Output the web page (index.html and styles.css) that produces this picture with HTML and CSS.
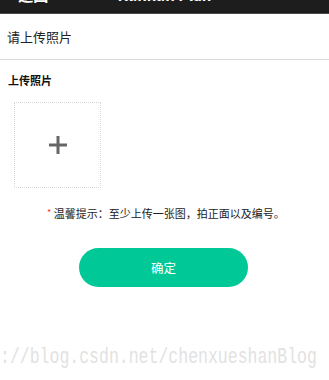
FILE: index.html
```html
<!DOCTYPE html>
<html lang="zh">
<head>
<meta charset="utf-8">
<link rel="stylesheet" href="styles.css">
</head>
<body>
<div class="topbar">
  <div class="topbar-inner">
    <span class="back">&lt; 返回</span>
    <span class="title">Kunkun Plan</span>
  </div>
</div>
<div class="head-row">请上传照片</div>
<div class="section">
  <div class="label">上传照片</div>
  <div class="upload">
    <svg width="20" height="20" viewBox="0 0 20 20"><path d="M10 1v18M1 10h18" stroke="#666" stroke-width="3" fill="none"/></svg>
  </div>
  <p class="tip"><span class="star">*</span> 温馨提示：至少上传一张图，拍正面以及编号。</p>
  <div class="btn-wrap"><button class="btn">确定</button></div>
</div>
<div class="watermark">://blog.csdn.net/chenxueshanBlog</div>
</body>
</html>
```
FILE: styles.css
```css
* { box-sizing: border-box; }
html, body { margin: 0; padding: 0; background: #fff; }
body {
  font-family: "Noto Sans CJK SC", "Liberation Sans", sans-serif;
  color: #222;
  width: 329px;
  height: 380px;
  overflow: hidden;
}
.topbar {
  height: 14px;
  background: #1d1d1d;
  border-bottom: 1px solid #4a4a4a;
  overflow: hidden;
}
.topbar-inner {
  margin-top: -14px;
  height: 16px;
  display: flex;
  align-items: center;
  position: relative;
  color: #fff;
  font-size: 15px;
  font-weight: bold;
}
.back { padding-left: 6px; }
.title { position: absolute; left: 0; right: 0; text-align: center; }
.head-row {
  height: 46px;
  display: flex;
  align-items: center;
  padding-left: 7px;
  font-size: 13px;
  color: #222;
  border-bottom: 1px solid #dcdcdc;
}
.section { padding: 0; }
.label {
  padding: 12px 0 0 8px;
  font-size: 11px;
  font-weight: bold;
  line-height: 16px;
  color: #111;
}
.upload {
  margin: 14px 0 0 14px;
  width: 87px;
  height: 86px;
  border: 1px dotted #d8d8d8;
  display: flex;
  align-items: center;
  justify-content: center;
}
.tip {
  margin: 16px 0 0 0;
  padding-left: 47px;
  font-size: 11px;
  line-height: 18px;
  color: #222;
  white-space: nowrap;
}
.star { color: #e33; font-size: 9px; vertical-align: 2px; }
.btn-wrap { display: flex; padding-left: 79px; margin-top: 26px; }
.btn {
  width: 169px;
  height: 39px;
  border: none;
  border-radius: 20px;
  background: #00c896;
  color: #fff;
  font-family: "Noto Sans CJK SC", sans-serif;
  font-size: 12.5px;
  padding: 0;
}
.watermark {
  margin-top: 60px;
  font-family: "Liberation Mono", monospace;
  font-size: 16.5px;
  color: #e2e2e2;
  white-space: nowrap;
  transform: scaleY(1.35);
  transform-origin: left center;
}
```
